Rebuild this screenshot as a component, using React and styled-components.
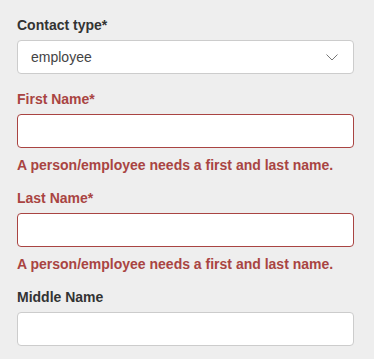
import React, { useState } from 'react';
import styled, { createGlobalStyle } from 'styled-components';

const GlobalStyle = createGlobalStyle`
    body {
        margin: 0;
        background-color: #eeeeee;
        font-family: "Liberation Sans", Arial, sans-serif;
    }
`;

const Form = styled.form`
    width: 337px;
    padding: 17px 20px 0 17px;

    display: flex;
    flex-direction: column;
`;

const Field = styled.div`
    display: flex;
    flex-direction: column;
    margin-bottom: 17px;
`;

const Label = styled.label`
    font-size: 14px;
    line-height: 16px;
    font-weight: bold;
    color: ${props => props.$error ? '#a94442' : '#333333'};
    margin-bottom: 7px;
`;

const TextInput = styled.input`
    box-sizing: border-box;
    width: 100%;
    height: 34px;
    padding: 0 13px;

    font-family: inherit;
    font-size: 14px;
    color: #444444;

    background-color: #ffffff;
    border: 1px solid ${props => props.$error ? '#a94442' : '#cccccc'};
    border-radius: 4px;
    outline: none;
`;

const SelectWrap = styled.div`
    position: relative;
    width: 100%;
    height: 34px;
`;

const Select = styled.select`
    box-sizing: border-box;
    width: 100%;
    height: 34px;
    padding: 0 13px;

    appearance: none;
    font-family: inherit;
    font-size: 14px;
    color: #444444;

    background-color: #ffffff;
    border: 1px solid #cccccc;
    border-radius: 4px;
    outline: none;
`;

const Chevron = styled.svg`
    position: absolute;
    right: 16px;
    top: 14px;
    pointer-events: none;
`;

const ErrorText = styled.div`
    font-size: 14px;
    line-height: 16px;
    font-weight: bold;
    color: #a94442;
    margin-top: 9px;
`;

const NAME_ERROR = 'A person/employee needs a first and last name.';

function App(){
    const [type, setType] = useState('employee');
    const [first, setFirst] = useState('');
    const [last, setLast] = useState('');
    const [middle, setMiddle] = useState('');

    const needsName = type === 'employee';

    return(
        <>
            <GlobalStyle />
            <Form onSubmit={e => e.preventDefault()}>
                <Field>
                    <Label>Contact type*</Label>
                    <SelectWrap>
                        <Select value={type} onChange={e => setType(e.target.value)}>
                            <option value="employee">employee</option>
                            <option value="company">company</option>
                        </Select>
                        <Chevron width="12" height="7" viewBox="0 0 12 7">
                            <path d="M0.5 0.5 L6 6 L11.5 0.5" fill="none" stroke="#777" strokeWidth="1" />
                        </Chevron>
                    </SelectWrap>
                </Field>
                <Field>
                    <Label $error={needsName && !first}>First Name*</Label>
                    <TextInput $error={needsName && !first} value={first} onChange={e => setFirst(e.target.value)} />
                    {needsName && !first && <ErrorText>{NAME_ERROR}</ErrorText>}
                </Field>
                <Field>
                    <Label $error={needsName && !last}>Last Name*</Label>
                    <TextInput $error={needsName && !last} value={last} onChange={e => setLast(e.target.value)} />
                    {needsName && !last && <ErrorText>{NAME_ERROR}</ErrorText>}
                </Field>
                <Field>
                    <Label>Middle Name</Label>
                    <TextInput value={middle} onChange={e => setMiddle(e.target.value)} />
                </Field>
            </Form>
        </>
    )
}

export default App;
